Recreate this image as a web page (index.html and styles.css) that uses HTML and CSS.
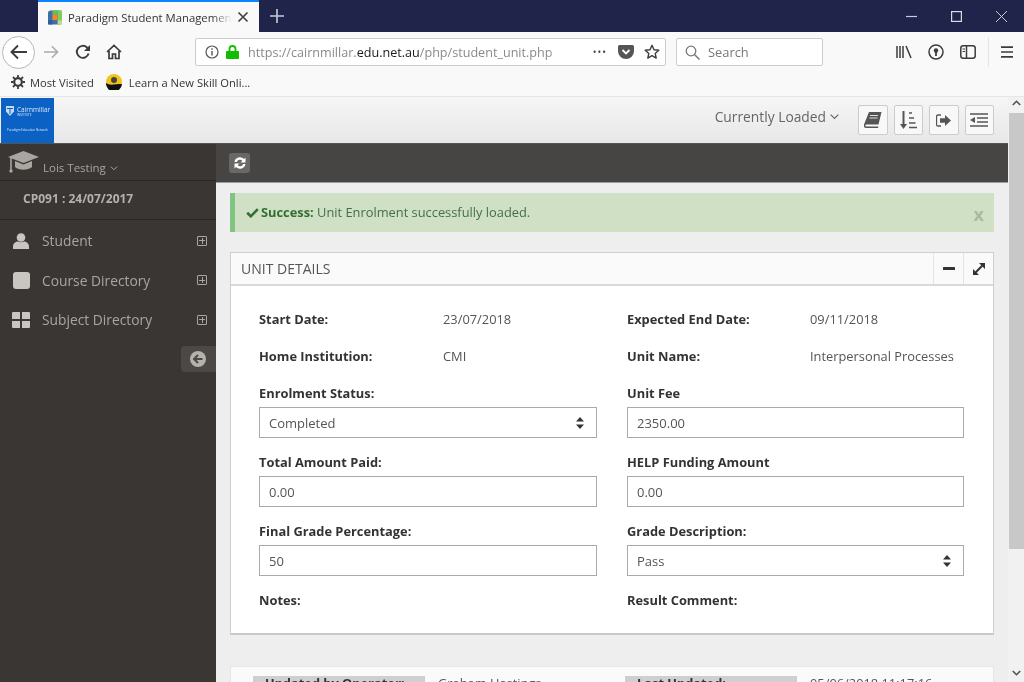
FILE: index.html
```html
<!DOCTYPE html>
<html lang="en">
<head>
    <meta charset="UTF-8">
    <meta name="viewport" content="width=device-width, initial-scale=1.0">
    <title>Paradigm Student Management</title>
    <link rel="stylesheet" href="styles.css">
</head>
<body>
    <div class="tabbar">
        <div class="tab">
            <svg class="favicon" width="14" height="15" viewBox="0 0 16 16">
                <rect width="16" height="16" rx="3" fill="#3d6fa8"/>
                <rect x="5" y="0" width="6" height="5" fill="#6cbf4b"/>
                <rect x="11" y="0" width="5" height="11" fill="#7ccf5b"/>
                <rect x="5" y="5" width="6" height="6" fill="#f08a24"/>
                <rect x="0" y="11" width="5" height="5" fill="#2f5f96"/>
                <rect x="11" y="11" width="5" height="5" fill="#b7dc8c"/>
            </svg>
            <span class="tab-title">Paradigm Student Managemen</span>
            <svg width="12" height="12" viewBox="0 0 12 12"><path d="M1.500 1.500l9 9M10.500 1.500l-9 9" stroke="#444" stroke-width="1.700"/></svg>
        </div>
        <svg class="newtab" width="14" height="14" viewBox="0 0 14 14"><path d="M7 0v14M0 7h14" stroke="#c9cbd6" stroke-width="1.600"/></svg>
        <div class="winctl">
            <svg width="11" height="11" viewBox="0 0 11 11"><path d="M0 5.500h11" stroke="#c9cbd6" stroke-width="1.200"/></svg>
            <svg width="11" height="11" viewBox="0 0 11 11"><rect x=".6" y=".6" width="9.800" height="9.800" fill="none" stroke="#d9dbe3" stroke-width="1.200"/></svg>
            <svg width="11" height="11" viewBox="0 0 11 11"><path d="M0 0l11 11M11 0L0 11" stroke="#c9cbd6" stroke-width="1"/></svg>
        </div>
    </div>

    <div class="navbar">
        <div class="back"><svg width="18" height="16" viewBox="0 0 18 16"><path d="M17 8H2M8 1.500L1.500 8 8 14.500" fill="none" stroke="#3c3c3f" stroke-width="1.900"/></svg></div>
        <svg class="tool fwd" width="16" height="14" viewBox="0 0 18 16"><path d="M1 8h15M10 1.500L16.500 8 10 14.500" fill="none" stroke="#aaa" stroke-width="1.800"/></svg>
        <svg class="tool reload" width="16" height="16" viewBox="0 0 16 16"><path d="M13.600 9.500A6 6 0 1 1 12 3.500L14 5.500" fill="none" stroke="#3c3c3f" stroke-width="1.900"/><path d="M15 1v6H9z" fill="#3c3c3f"/></svg>
        <svg class="tool home" width="16" height="16" viewBox="0 0 16 16"><path d="M1 8l7-6.500L15 8M3 7v7.500h3.500V10h3v4.500H13V7" fill="none" stroke="#3c3c3f" stroke-width="1.700"/></svg>
        <div class="urlbar">
            <svg width="14" height="14" viewBox="0 0 14 14"><circle cx="7" cy="7" r="6" fill="none" stroke="#555" stroke-width="1.200"/><path d="M7 6v4.500M7 3.200v1.500" stroke="#555" stroke-width="1.400"/></svg>
            <svg class="lock" width="13" height="14" viewBox="0 0 13 14"><path d="M3.500 6V4a3 3 0 0 1 6 0v2" fill="none" stroke="#12bc00" stroke-width="1.800"/><rect y="6" width="13" height="8" rx="1" fill="#12bc00"/></svg>
            <span class="url">https://cairnmillar.<b>edu.net.au</b>/php/student_unit.php</span>
            <span class="dots">•••</span>
            <svg class="pocket" width="16" height="14" viewBox="0 0 16 14"><path d="M1.500 0h13A1.500 1.500 0 0 1 16 1.500V6A8 8 0 0 1 0 6V1.500A1.500 1.500 0 0 1 1.500 0z" fill="#555"/><path d="M4.500 5L8 8.500 11.500 5" fill="none" stroke="#fff" stroke-width="1.800"/></svg>
            <svg width="16" height="16" viewBox="0 0 16 16"><path d="M8 1.300l2 4.400 4.800.5-3.600 3.200 1 4.700L8 11.700l-4.200 2.400 1-4.700L1.200 6.200 6 5.700z" fill="none" stroke="#3c3c3f" stroke-width="1.400" stroke-linejoin="round"/></svg>
        </div>
        <div class="searchbar">
            <svg width="15" height="15" viewBox="0 0 15 15"><circle cx="6" cy="6" r="4.800" fill="none" stroke="#777" stroke-width="1.300"/><path d="M9.500 9.500l5 5" stroke="#777" stroke-width="1.500"/></svg>
            <span>Search</span>
        </div>
        <div class="nav-right">
            <svg width="16" height="14" viewBox="0 0 16 14"><path d="M1 1v12M4 1v12M7 1v12M10 1l5 12" stroke="#3c3c3f" stroke-width="1.500" fill="none"/></svg>
            <svg width="16" height="16" viewBox="0 0 16 16"><circle cx="8" cy="8" r="7" fill="none" stroke="#3c3c3f" stroke-width="1.500"/><circle cx="8" cy="6.500" r="2.200" fill="#3c3c3f"/><path d="M8 7v5" stroke="#3c3c3f" stroke-width="1.800"/></svg>
            <svg width="16" height="14" viewBox="0 0 16 14"><rect x=".8" y=".8" width="14.400" height="12.400" rx="2.500" fill="none" stroke="#3c3c3f" stroke-width="1.500"/><path d="M6.500 1v12" stroke="#3c3c3f" stroke-width="1.500"/><path d="M2.500 4h2.500M2.500 6.500h2.500" stroke="#3c3c3f"/></svg>
            <span class="nav-sep"></span>
            <svg width="12" height="12" viewBox="0 0 12 12"><path d="M0 1.200h12M0 6h12M0 10.800h12" stroke="#3c3c3f" stroke-width="1.700"/></svg>
        </div>
    </div>

    <div class="bookmarks">
        <svg width="14" height="14" viewBox="0 0 14 14"><circle cx="7" cy="7" r="3.800" fill="none" stroke="#3c3c3f" stroke-width="2.200"/><path d="M7 0v2.500M7 11.500V14M0 7h2.500M11.500 7H14M2 2l1.800 1.800M10.200 10.200L12 12M12 2l-1.800 1.800M3.800 10.200L2 12" stroke="#3c3c3f" stroke-width="1.800"/></svg>
        <span class="bm-text">Most Visited</span>
        <svg class="bm-icon" width="16" height="16" viewBox="0 0 16 16"><circle cx="8" cy="8" r="8" fill="#f3c51b"/><path d="M0 9c4 3 8 1 16 1A8 8 0 0 1 0 9z" fill="#111"/><circle cx="8" cy="6" r="3" fill="#444"/></svg>
        <span class="bm-text">Learn a New Skill Onli...</span>
    </div>

    <div class="viewport">
        <div class="app">
            <header class="app-header">
                <div class="logo">
                    <div class="logo-top">
                        <svg width="8" height="10" viewBox="0 0 8 10"><path d="M0 0h8v5.500L4 10 0 5.500z" fill="#c6d9f2"/><path d="M1 2.500h6M4 2.500V8" stroke="#0b61c4"/></svg>
                        <div>
                            <div class="logo-name">Cairnmillar</div>
                            <div class="logo-sub">INSTITUTE</div>
                        </div>
                    </div>
                    <div class="logo-foot">Paradigm Education Network</div>
                </div>
                <div class="loaded">Currently Loaded <svg width="9" height="6" viewBox="0 0 9 6"><path d="M.7.700l3.800 3.800L8.300.700" fill="none" stroke="#666" stroke-width="1.200"/></svg></div>
                <div class="head-buttons">
                    <div class="head-btn"><svg width="18" height="16" viewBox="0 0 18 16"><path d="M5 0h12.500l-3 12.500H2.500c-1.500 0-1.500 2 0 2h12L14 16H2C0 16-.5 14.500 0 12.500z" fill="#555"/><path d="M6 3.500h8M5.500 6h8" stroke="#eee" stroke-width=".9"/></svg></div>
                    <div class="head-btn"><svg width="17" height="18" viewBox="0 0 17 18"><path d="M3.500 0v14" stroke="#555" stroke-width="2"/><path d="M0 13h7l-3.500 5z" fill="#555"/><path d="M9 2h3M9 7h5M9 12h6.500M9 16.500h8" stroke="#555" stroke-width="1.700"/></svg></div>
                    <div class="head-btn"><svg width="15" height="13" viewBox="0 0 15 13"><path d="M5 1H2a1.500 1.500 0 0 0-1.500 1.500v8A1.500 1.500 0 0 0 2 12h3" fill="none" stroke="#555" stroke-width="1.300"/><path d="M4 4.200h5V1l6 5.500-6 5.500V8.800H4z" fill="#555"/></svg></div>
                    <div class="head-btn"><svg width="18" height="14" viewBox="0 0 18 14"><path d="M0 1h18M7 5h11M7 9h11M0 13h18" stroke="#555" stroke-width="1.700"/><path d="M5 4v6L0 7z" fill="#555"/></svg></div>
                </div>
            </header>

            <div class="app-body">
                <aside class="sidebar">
                    <div class="side-user">
                        <svg width="31" height="22" viewBox="0 0 31 22"><path d="M15.500 0L31 6l-15.500 6L0 6z" fill="#a9a5a0"/><path d="M7 10v6c4 3.500 13 3.500 17 0v-6l-8.500 3.500z" fill="#a9a5a0"/><path d="M3 7v12" stroke="#a9a5a0" stroke-width="1.600"/><circle cx="3" cy="20" r="1.700" fill="#a9a5a0"/></svg>
                        <span>Lois Testing</span>
                        <svg width="8" height="5" viewBox="0 0 9 6"><path d="M.7.700l3.800 3.800L8.300.700" fill="none" stroke="#a9a5a0" stroke-width="1.200"/></svg>
                    </div>
                    <div class="side-course">CP091 : 24/07/2017</div>
                    <nav class="side-nav">
                        <a class="side-link">
                            <span class="side-ico"><svg width="16" height="16" viewBox="0 0 16 16"><circle cx="8" cy="4.500" r="4.300" fill="#c9c5c0"/><path d="M0 16v-2.500C0 10 3 8.500 5 8.500c1.500 1 4.500 1 6 0 2 0 5 1.500 5 5V16z" fill="#c9c5c0"/></svg></span>
                            <span class="side-label">Student</span>
                            <i class="plus"></i>
                        </a>
                        <a class="side-link">
                            <span class="side-ico"><svg width="17" height="17" viewBox="0 0 17 17"><rect width="17" height="17" rx="3" fill="#c9c5c0"/></svg></span>
                            <span class="side-label">Course Directory</span>
                            <i class="plus"></i>
                        </a>
                        <a class="side-link">
                            <span class="side-ico"><svg width="18" height="16" viewBox="0 0 18 16"><path d="M0 1a1 1 0 0 1 1-1h7v7H0zM10 0h7a1 1 0 0 1 1 1v6h-8zM0 9h8v7H1a1 1 0 0 1-1-1zM10 9h8v6a1 1 0 0 1-1 1h-7z" fill="#c9c5c0"/></svg></span>
                            <span class="side-label">Subject Directory</span>
                            <i class="plus"></i>
                        </a>
                    </nav>
                    <div class="side-collapse"><svg width="16" height="16" viewBox="0 0 16 16"><circle cx="8" cy="8" r="8" fill="#b5b1ac"/><path d="M12.500 8H5M8 4L4 8l4 4" fill="none" stroke="#4b4845" stroke-width="2"/></svg></div>
                </aside>

                <main class="content">
                    <div class="content-bar">
                        <div class="refresh"><svg width="14" height="14" viewBox="0 0 14 14"><path d="M1.500 6A5.600 5.600 0 0 1 11 3l1.500-1.500V6.500H7.500L9.300 4.700A3.300 3.300 0 0 0 3.800 6zM12.500 8A5.600 5.600 0 0 1 3 11l-1.500 1.500V7.500h5L4.700 9.300A3.300 3.300 0 0 0 10.200 8z" fill="#fff"/></svg></div>
                    </div>

                    <div class="content-inner">
                        <div class="alert">
                            <svg width="13" height="10" viewBox="0 0 13 10"><path d="M1.200 4.800L4.800 8.300 11.800 1.200" fill="none" stroke="#356e35" stroke-width="2.600"/></svg>
                            <span class="alert-text"><b>Success:</b> Unit Enrolment successfully loaded.</span>
                            <span class="alert-x">x</span>
                        </div>

                        <section class="card">
                            <div class="card-head">
                                <span class="card-title">UNIT DETAILS</span>
                                <div class="card-tool"><svg width="12" height="3" viewBox="0 0 12 3"><rect width="12" height="3" rx=".5" fill="#333"/></svg></div>
                                <div class="card-tool"><svg width="12" height="12" viewBox="0 0 13 13"><path d="M6.500 0H13v6.500zM0 13V6.500L6.500 13z" fill="#333"/><path d="M3 10L10 3" stroke="#333" stroke-width="2.200"/></svg></div>
                            </div>
                            <div class="card-body">
                                <div class="field-row"><b>Start Date:</b><span>23/07/2018</span></div>
                                <div class="field-row"><b>Expected End Date:</b><span>09/11/2018</span></div>
                                <div class="field-row"><b>Home Institution:</b><span>CMI</span></div>
                                <div class="field-row"><b>Unit Name:</b><span>Interpersonal Processes</span></div>

                                <div class="field">
                                    <label>Enrolment Status:</label>
                                    <div class="input">Completed<svg class="updown" width="8" height="12" viewBox="0 0 8 12"><path d="M4 0l4 4.500H0zM4 12L0 7.500h8z" fill="#333"/></svg></div>
                                </div>
                                <div class="field">
                                    <label>Unit Fee</label>
                                    <div class="input">2350.00</div>
                                </div>
                                <div class="field">
                                    <label>Total Amount Paid:</label>
                                    <div class="input">0.00</div>
                                </div>
                                <div class="field">
                                    <label>HELP Funding Amount</label>
                                    <div class="input">0.00</div>
                                </div>
                                <div class="field">
                                    <label>Final Grade Percentage:</label>
                                    <div class="input">50</div>
                                </div>
                                <div class="field">
                                    <label>Grade Description:</label>
                                    <div class="input">Pass<svg class="updown" width="8" height="12" viewBox="0 0 8 12"><path d="M4 0l4 4.500H0zM4 12L0 7.500h8z" fill="#333"/></svg></div>
                                </div>
                                <div class="field-note"><b>Notes:</b></div>
                                <div class="field-note"><b>Result Comment:</b></div>
                            </div>
                        </section>

                        <section class="card-foot">
                            <b class="chip">Updated by Operator:</b><span>Graham Hastings</span>
                            <b class="chip">Last Updated:</b><span>05/06/2018 11:17:16</span>
                        </section>
                    </div>
                </main>
            </div>
        </div>

        <div class="scrollbar">
            <svg width="9" height="6" viewBox="0 0 9 6"><path d="M.8 5L4.500 1.300 8.200 5" fill="none" stroke="#505050" stroke-width="1.600"/></svg>
            <div class="thumb"></div>
            <svg class="scroll-down" width="9" height="6" viewBox="0 0 9 6"><path d="M.8 1L4.500 4.700 8.200 1" fill="none" stroke="#505050" stroke-width="1.600"/></svg>
        </div>
    </div>
</body>
</html>
```

FILE: styles.css
```css
html, body {
    margin: 0;
    height: 682px;
    overflow: hidden;
}
body {
    display: flex;
    flex-direction: column;
    font-family: "Open Sans", "Noto Sans", sans-serif;
    font-size: 12.850px;
    color: #444;
    background-color: #f9f9fa;
    filter: blur(0.4px);
}

/* browser chrome */
.tabbar {
    display: flex;
    align-items: center;
    flex: 0 0 32px;
    padding-left: 38px;
    background-color: #20244a;
}
.tab {
    display: flex;
    align-items: center;
    box-sizing: border-box;
    width: 221px;
    height: 32px;
    padding: 0 10px;
    background-color: #f9f9fa;
    border-top: 2px solid #0a84ff;
}
.favicon {
    flex: none;
    margin-right: 6px;
}
.tab-title {
    flex: 1;
    overflow: hidden;
    white-space: nowrap;
    font-size: 11.300px;
    color: #333;
    -webkit-mask-image: linear-gradient(to right, #000 88%, transparent);
    mask-image: linear-gradient(to right, #000 88%, transparent);
}
.tab svg:last-child {
    flex: none;
    margin-left: 5px;
}
.newtab {
    margin-left: 11px;
}
.winctl {
    display: flex;
    gap: 34px;
    margin-left: auto;
    padding-right: 17px;
}
.navbar {
    display: flex;
    align-items: center;
    flex: 0 0 40px;
    height: 40px;
    padding-left: 2px;
    box-sizing: border-box;
}
.back {
    display: flex;
    align-items: center;
    justify-content: center;
    box-sizing: border-box;
    width: 33px;
    height: 33px;
    background-color: #fff;
    border: 1px solid #b5b5b5;
    border-radius: 50%;
}
.tool {
    flex: none;
}
.fwd {
    margin-left: 8px;
}
.reload {
    margin-left: 16px;
}
.home {
    margin-left: 15px;
}
.urlbar {
    display: flex;
    align-items: center;
    box-sizing: border-box;
    width: 471px;
    height: 28px;
    margin-left: 73px;
    padding: 0 5px 0 9px;
    background-color: #fff;
    border: 1px solid #ccc;
    border-radius: 2px;
}
.lock {
    margin-left: 7px;
}
.url {
    flex: 1;
    margin-left: 9px;
    padding-top: 1px;
    overflow: hidden;
    white-space: nowrap;
    font-size: 12.600px;
    color: #8a8a8a;
    -webkit-mask-image: linear-gradient(to right, #000 90%, transparent);
    mask-image: linear-gradient(to right, #000 90%, transparent);
}
.url b {
    font-weight: 400;
    color: #1b1b1b;
}
.dots {
    font-size: 10px;
    letter-spacing: 1px;
    color: #444;
    margin-left: 12px;
}
.pocket {
    margin: 0 10px 0 11px;
}
.searchbar {
    display: flex;
    align-items: center;
    gap: 8px;
    box-sizing: border-box;
    width: 147px;
    height: 28px;
    margin-left: 10px;
    padding-left: 8px;
    background-color: #fff;
    border: 1px solid #ccc;
    border-radius: 2px;
    color: #777;
}
.nav-right {
    display: flex;
    align-items: center;
    gap: 16px;
    margin-left: 73px;
}
.nav-sep {
    width: 1px;
    height: 30px;
    margin: 0 -4px 0 -4px;
    background-color: #e4e4e6;
}
.bookmarks {
    display: flex;
    align-items: center;
    flex: 0 0 24px;
    height: 24px;
    padding: 0 0 4px 11px;
    box-sizing: border-box;
}
.bm-text {
    margin-left: 5px;
    font-size: 11.200px;
    color: #333;
}
.bm-icon {
    margin-left: 12px;
    margin-right: 2px;
}

/* page */
.viewport {
    display: flex;
    flex: 1;
    min-height: 0;
    border-top: 1px solid #e6e6e6;
}
.app {
    display: flex;
    flex-direction: column;
    flex: 1;
    min-width: 0;
}
.app-header {
    display: flex;
    align-items: center;
    flex: 0 0 47px;
    padding-left: 1px;
    background: linear-gradient(to bottom, #f6f6f6, #e7e7e7);
    border-bottom: 1px solid #555;
    box-sizing: border-box;
    height: 47px;
}
.logo {
    box-sizing: border-box;
    width: 53px;
    height: 45px;
    padding-top: 8px;
    background-color: #0b61c4;
    color: #dbe8f7;
}
.logo-top {
    display: flex;
    gap: 3px;
    padding-left: 5px;
}
.logo-name {
    font-size: 6.500px;
    line-height: 7px;
}
.logo-sub {
    font-size: 3px;
    line-height: 4px;
}
.logo-foot {
    margin-top: 11px;
    font-size: 3px;
    line-height: 4px;
    text-align: center;
    white-space: nowrap;
}
.loaded {
    display: flex;
    align-items: center;
    gap: 4px;
    margin: 0 0 7px auto;
    font-size: 13.800px;
    color: #666;
}
.head-buttons {
    display: flex;
    gap: 6px;
    margin: 0 14px 0 19px;
}
.head-btn {
    display: flex;
    align-items: center;
    justify-content: center;
    box-sizing: border-box;
    width: 29.500px;
    height: 30px;
    background-color: #f8f8f8;
    border: 1px solid #ccc;
    border-radius: 2px;
}
.app-body {
    display: flex;
    flex: 1;
    min-height: 0;
}
.sidebar {
    display: flex;
    flex-direction: column;
    flex: 0 0 216px;
    background-color: #3a3633;
    color: #a9a5a0;
}
.side-user {
    display: flex;
    align-items: center;
    gap: 4px;
    box-sizing: border-box;
    height: 37px;
    padding-left: 8px;
    font-size: 11.500px;
    border-bottom: 1px solid #2b2826;
}
.side-user span {
    margin: 11px 0 0;
}
.side-user svg:last-child {
    margin-top: 12px;
}
.side-course {
    box-sizing: border-box;
    height: 39px;
    padding: 9px 0 0 23px;
    font-size: 12px;
    font-weight: 700;
    color: #b5b1ac;
    border-bottom: 1px solid #2b2826;
}
.side-nav {
    display: flex;
    flex-direction: column;
    padding-top: 1px;
}
.side-link {
    display: flex;
    align-items: center;
    height: 39.500px;
    padding-left: 12px;
    font-size: 13.800px;
    color: #a9a5a0;
}
.side-ico {
    display: flex;
    justify-content: center;
    flex: none;
    width: 18px;
    margin-right: 12px;
}
.side-label {
    flex: 1;
}
.plus {
    position: relative;
    box-sizing: border-box;
    width: 10px;
    height: 10px;
    margin-right: 9px;
    border: 1px solid #a9a5a0;
    border-radius: 1px;
}
.plus::before {
    content: "";
    position: absolute;
    left: 1px;
    right: 1px;
    top: 3.500px;
    height: 1px;
    background-color: #a9a5a0;
}
.plus::after {
    content: "";
    position: absolute;
    top: 1px;
    bottom: 1px;
    left: 3.500px;
    width: 1px;
    background-color: #a9a5a0;
}
.side-collapse {
    display: flex;
    align-items: center;
    box-sizing: border-box;
    align-self: flex-end;
    width: 35px;
    height: 26px;
    margin-top: 6px;
    padding-left: 9px;
    background-color: #4b4845;
    border-radius: 4px 0 0 4px;
}
.content {
    display: flex;
    flex-direction: column;
    flex: 1;
    min-width: 0;
    background-color: #eeeeee;
}
.content-bar {
    display: flex;
    align-items: center;
    flex: 0 0 39px;
    padding-left: 13px;
    background-color: #474543;
    border-bottom: 1px solid #999;
    box-sizing: border-box;
}
.refresh {
    display: flex;
    align-items: center;
    justify-content: center;
    width: 21px;
    height: 20px;
    background-color: #6a6866;
    border-radius: 3px;
}
.content-inner {
    padding: 10px 14px 0;
}
.alert {
    display: flex;
    align-items: center;
    gap: 2px;
    box-sizing: border-box;
    height: 39px;
    padding: 0 10px 0 11px;
    background-color: #cfe0c4;
    border-left: 5px solid #7fc483;
    color: #44704a;
}
.alert-text {
    margin-bottom: 2px;
}
.alert b {
    color: #356e35;
}
.alert-x {
    margin: 2px 0 0 auto;
    font-size: 18px;
    font-weight: 700;
    color: #a9b9a2;
}
.card {
    margin-top: 20px;
    background-color: #fff;
    border: 1px solid #cfcfcf;
    border-bottom: 2px solid #c8c8c8;
}
.card-head {
    display: flex;
    align-items: stretch;
    height: 31px;
    background-color: #fafafa;
    border-bottom: 2px solid #d9d9d9;
}
.card-title {
    flex: 1;
    padding-left: 10px;
    font-size: 14px;
    line-height: 32px;
    color: #555;
}
.card-tool {
    display: flex;
    align-items: center;
    justify-content: center;
    width: 29px;
    border-left: 1px solid #e4e4e4;
}
.card-body {
    display: grid;
    grid-template-columns: 338px 337px;
    column-gap: 30px;
    padding: 24px 29px 0 28px;
}
.field-row {
    display: grid;
    grid-template-columns: 184px 1fr;
    height: 37px;
    color: #555;
}
.field-row:nth-child(even) {
    grid-template-columns: 183px 1fr;
}
.field-row:nth-child(n+3) {
    height: 39px;
}
.field-row b, .field label, .field-note b {
    font-weight: 700;
    color: #333;
}
.field {
    display: flex;
    flex-direction: column;
    height: 69px;
}
.field label {
    line-height: 15px;
    margin-bottom: 6px;
}
.input {
    display: flex;
    align-items: center;
    justify-content: space-between;
    box-sizing: border-box;
    height: 31px;
    padding: 0 12px 0 9px;
    font-size: 13px;
    background-color: #fff;
    border: 1px solid #aaa;
    color: #555;
}
.field-note {
    height: 42px;
    margin-top: -2px;
}
.card-foot {
    display: flex;
    gap: 13px;
    align-items: flex-start;
    box-sizing: border-box;
    height: 60px;
    margin-top: 31px;
    padding: 9px 0 0 22px;
    background-color: #fafafa;
    border: 1px solid #e6e6e6;
    color: #555;
}
.chip {
    box-sizing: border-box;
    width: 172px;
    padding: 0 0 6px 12px;
    background-color: #cfcfcf;
    color: #333;
    line-height: 14px;
}
.card-foot span {
    width: 174px;
    line-height: 14px;
}
.scrollbar {
    display: flex;
    flex-direction: column;
    align-items: center;
    flex: 0 0 16px;
    padding-top: 3px;
    box-sizing: border-box;
    background-color: #f1f1f1;
}
.thumb {
    flex: none;
    width: 15px;
    height: 436px;
    margin-top: 7px;
    background-color: #c8c8c8;
}
.scroll-down {
    margin-top: auto;
    margin-bottom: 6px;
}
```
